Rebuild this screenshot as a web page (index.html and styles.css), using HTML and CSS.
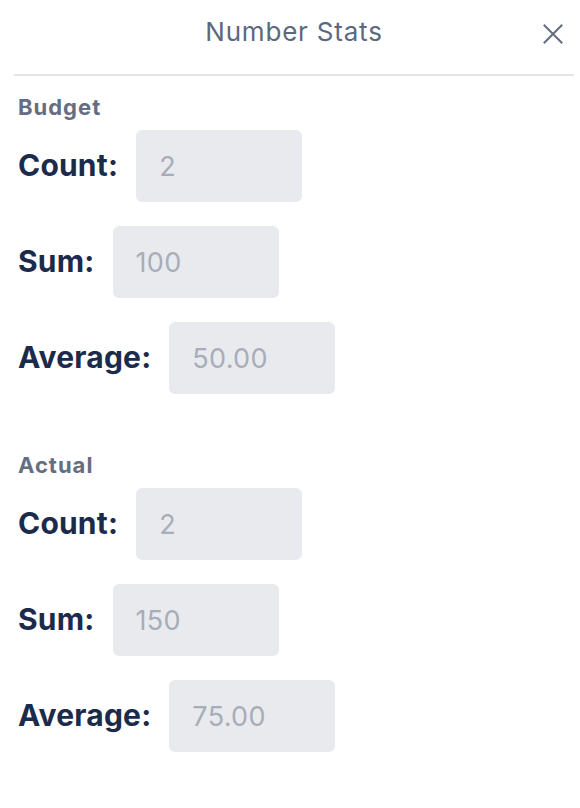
FILE: index.html
```html
<!DOCTYPE html>
<html>
<head>
<meta charset="utf-8">
<link rel="stylesheet" href="styles.css">
</head>
<body>
<div class="panel">
  <header class="header">
    <h1 class="title">Number Stats</h1>
    <button class="close" aria-label="Close">
      <svg width="20" height="20" viewBox="0 0 20 20"><path d="M1.5 1.5 L18.5 18.5 M18.5 1.5 L1.5 18.5" stroke="#636c80" stroke-width="2" stroke-linecap="square" fill="none"/></svg>
    </button>
  </header>
  <section class="group">
    <h2 class="group-title">Budget</h2>
    <div class="row"><span class="label">Count:</span><div class="field">2</div></div>
    <div class="row"><span class="label">Sum:</span><div class="field">100</div></div>
    <div class="row"><span class="label">Average:</span><div class="field">50.00</div></div>
  </section>
  <section class="group">
    <h2 class="group-title">Actual</h2>
    <div class="row"><span class="label">Count:</span><div class="field">2</div></div>
    <div class="row"><span class="label">Sum:</span><div class="field">150</div></div>
    <div class="row"><span class="label">Average:</span><div class="field">75.00</div></div>
  </section>
</div>
</body>
</html>
```
FILE: styles.css
```css
* { box-sizing: border-box; }
body {
  margin: 0;
  background: #ffffff;
  font-family: Inter, "Noto Sans", sans-serif;
}
.panel {
  padding: 0 6px 0 14px;
}
.header {
  position: relative;
  display: flex;
  justify-content: center;
  padding: 19px 0 29px;
  border-bottom: 2px solid #e3e4e8;
}
.title {
  margin: 0;
  font-size: 26px;
  line-height: 26px;
  letter-spacing: 0.8px;
  font-weight: 400;
  color: #5d687d;
}
.close {
  position: absolute;
  right: 11px;
  top: 24px;
  width: 20px;
  height: 20px;
  padding: 0;
  border: 0;
  background: none;
  display: flex;
}
.group {
  padding: 0 4px;
  display: flex;
  flex-direction: column;
  gap: 24px;
}
.group:first-of-type { margin-top: 19px; }
.group + .group { margin-top: 59px; }
.group-title {
  margin: 0 0 -13px;
  font-size: 22px;
  line-height: 24px;
  letter-spacing: 1px;
  font-weight: 700;
  color: #646d82;
}
.row {
  display: flex;
  align-items: baseline;
  gap: 18px;
}
.label {
  font-size: 30px;
  letter-spacing: 0.2px;
  font-weight: 700;
  color: #1c2a4b;
}
.field {
  width: 166px;
  height: 72px;
  padding-left: 23px;
  display: flex;
  align-items: center;
  border-radius: 6px;
  background: #e9eaee;
  font-size: 27px;
  letter-spacing: 0.3px;
  color: #a7adb9;
}
```
